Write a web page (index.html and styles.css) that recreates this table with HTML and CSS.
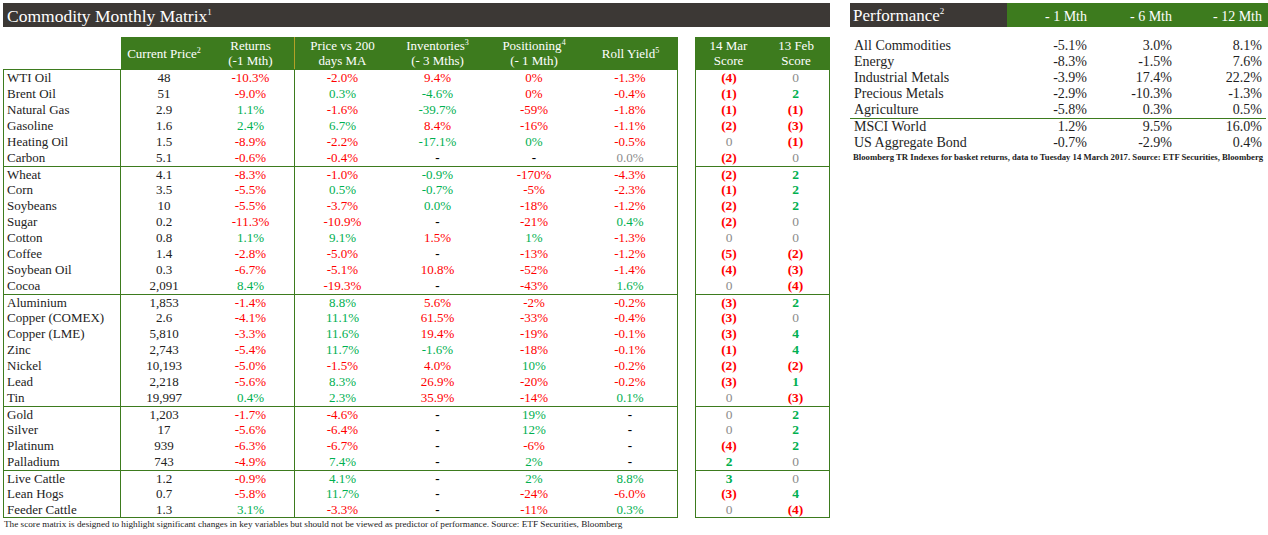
FILE: index.html
```html
<!DOCTYPE html>
<html>
<head>
<meta charset="utf-8">
<link rel="stylesheet" href="styles.css">
</head>
<body>
<div class="page">
  <section class="left">
    <div class="title">Commodity Monthly Matrix<sup>1</sup></div>
    <div class="tables">
      <div class="matrix">
        <div class="mhead">
          <div class="hc blank"></div>
          <div class="hc"><span>Current Price<sup>2</sup></span></div>
          <div class="hc sep"><span>Returns<br>(-1 Mth)</span></div>
          <div class="hc"><span>Price vs 200<br>days MA</span></div>
          <div class="hc"><span>Inventories<sup>3</sup><br>(- 3 Mths)</span></div>
          <div class="hc"><span>Positioning<sup>4</sup><br>(- 1 Mth)</span></div>
          <div class="hc"><span>Roll Yield<sup>5</sup></span></div>
        </div>
        <div class="mbody">
          <div class="grp">
            <div class="row"><span class="nm">WTI Oil</span><span class="pr">48</span><span class="r sep">-10.3%</span><span class="r">-2.0%</span><span class="r">9.4%</span><span class="r">0%</span><span class="r">-1.3%</span></div>
            <div class="row"><span class="nm">Brent Oil</span><span class="pr">51</span><span class="r sep">-9.0%</span><span class="g">0.3%</span><span class="g">-4.6%</span><span class="r">0%</span><span class="r">-0.4%</span></div>
            <div class="row"><span class="nm">Natural Gas</span><span class="pr">2.9</span><span class="g sep">1.1%</span><span class="r">-1.6%</span><span class="g">-39.7%</span><span class="r">-59%</span><span class="r">-1.8%</span></div>
            <div class="row"><span class="nm">Gasoline</span><span class="pr">1.6</span><span class="g sep">2.4%</span><span class="g">6.7%</span><span class="r">8.4%</span><span class="r">-16%</span><span class="r">-1.1%</span></div>
            <div class="row"><span class="nm">Heating Oil</span><span class="pr">1.5</span><span class="r sep">-8.9%</span><span class="r">-2.2%</span><span class="g">-17.1%</span><span class="g">0%</span><span class="r">-0.5%</span></div>
            <div class="row"><span class="nm">Carbon</span><span class="pr">5.1</span><span class="r sep">-0.6%</span><span class="r">-0.4%</span><span class="d">-</span><span class="d">-</span><span class="k">0.0%</span></div>
          </div>
          <div class="grp">
            <div class="row"><span class="nm">Wheat</span><span class="pr">4.1</span><span class="r sep">-8.3%</span><span class="r">-1.0%</span><span class="g">-0.9%</span><span class="r">-170%</span><span class="r">-4.3%</span></div>
            <div class="row"><span class="nm">Corn</span><span class="pr">3.5</span><span class="r sep">-5.5%</span><span class="g">0.5%</span><span class="g">-0.7%</span><span class="r">-5%</span><span class="r">-2.3%</span></div>
            <div class="row"><span class="nm">Soybeans</span><span class="pr">10</span><span class="r sep">-5.5%</span><span class="r">-3.7%</span><span class="g">0.0%</span><span class="r">-18%</span><span class="r">-1.2%</span></div>
            <div class="row"><span class="nm">Sugar</span><span class="pr">0.2</span><span class="r sep">-11.3%</span><span class="r">-10.9%</span><span class="d">-</span><span class="r">-21%</span><span class="g">0.4%</span></div>
            <div class="row"><span class="nm">Cotton</span><span class="pr">0.8</span><span class="g sep">1.1%</span><span class="g">9.1%</span><span class="r">1.5%</span><span class="g">1%</span><span class="r">-1.3%</span></div>
            <div class="row"><span class="nm">Coffee</span><span class="pr">1.4</span><span class="r sep">-2.8%</span><span class="r">-5.0%</span><span class="d">-</span><span class="r">-13%</span><span class="r">-1.2%</span></div>
            <div class="row"><span class="nm">Soybean Oil</span><span class="pr">0.3</span><span class="r sep">-6.7%</span><span class="r">-5.1%</span><span class="r">10.8%</span><span class="r">-52%</span><span class="r">-1.4%</span></div>
            <div class="row"><span class="nm">Cocoa</span><span class="pr">2,091</span><span class="g sep">8.4%</span><span class="r">-19.3%</span><span class="d">-</span><span class="r">-43%</span><span class="g">1.6%</span></div>
          </div>
          <div class="grp">
            <div class="row"><span class="nm">Aluminium</span><span class="pr">1,853</span><span class="r sep">-1.4%</span><span class="g">8.8%</span><span class="r">5.6%</span><span class="r">-2%</span><span class="r">-0.2%</span></div>
            <div class="row"><span class="nm">Copper (COMEX)</span><span class="pr">2.6</span><span class="r sep">-4.1%</span><span class="g">11.1%</span><span class="r">61.5%</span><span class="r">-33%</span><span class="r">-0.4%</span></div>
            <div class="row"><span class="nm">Copper (LME)</span><span class="pr">5,810</span><span class="r sep">-3.3%</span><span class="g">11.6%</span><span class="r">19.4%</span><span class="r">-19%</span><span class="r">-0.1%</span></div>
            <div class="row"><span class="nm">Zinc</span><span class="pr">2,743</span><span class="r sep">-5.4%</span><span class="g">11.7%</span><span class="g">-1.6%</span><span class="r">-18%</span><span class="r">-0.1%</span></div>
            <div class="row"><span class="nm">Nickel</span><span class="pr">10,193</span><span class="r sep">-5.0%</span><span class="r">-1.5%</span><span class="r">4.0%</span><span class="g">10%</span><span class="r">-0.2%</span></div>
            <div class="row"><span class="nm">Lead</span><span class="pr">2,218</span><span class="r sep">-5.6%</span><span class="g">8.3%</span><span class="r">26.9%</span><span class="r">-20%</span><span class="r">-0.2%</span></div>
            <div class="row"><span class="nm">Tin</span><span class="pr">19,997</span><span class="g sep">0.4%</span><span class="g">2.3%</span><span class="r">35.9%</span><span class="r">-14%</span><span class="g">0.1%</span></div>
          </div>
          <div class="grp">
            <div class="row"><span class="nm">Gold</span><span class="pr">1,203</span><span class="r sep">-1.7%</span><span class="r">-4.6%</span><span class="d">-</span><span class="g">19%</span><span class="d">-</span></div>
            <div class="row"><span class="nm">Silver</span><span class="pr">17</span><span class="r sep">-5.6%</span><span class="r">-6.4%</span><span class="d">-</span><span class="g">12%</span><span class="d">-</span></div>
            <div class="row"><span class="nm">Platinum</span><span class="pr">939</span><span class="r sep">-6.3%</span><span class="r">-6.7%</span><span class="d">-</span><span class="r">-6%</span><span class="d">-</span></div>
            <div class="row"><span class="nm">Palladium</span><span class="pr">743</span><span class="r sep">-4.9%</span><span class="g">7.4%</span><span class="d">-</span><span class="g">2%</span><span class="d">-</span></div>
          </div>
          <div class="grp">
            <div class="row"><span class="nm">Live Cattle</span><span class="pr">1.2</span><span class="r sep">-0.9%</span><span class="g">4.1%</span><span class="d">-</span><span class="g">2%</span><span class="g">8.8%</span></div>
            <div class="row"><span class="nm">Lean Hogs</span><span class="pr">0.7</span><span class="r sep">-5.8%</span><span class="g">11.7%</span><span class="d">-</span><span class="r">-24%</span><span class="r">-6.0%</span></div>
            <div class="row"><span class="nm">Feeder Cattle</span><span class="pr">1.3</span><span class="g sep">3.1%</span><span class="r">-3.3%</span><span class="d">-</span><span class="r">-11%</span><span class="g">0.3%</span></div>
          </div>
        </div>
      </div>
      <div class="score">
        <div class="shead">
          <div class="hc"><span>14 Mar<br>Score</span></div>
          <div class="hc"><span>13 Feb<br>Score</span></div>
        </div>
        <div class="sbody">
          <div class="grp">
            <div class="srow"><span class="sr">(4)</span><span class="sk">0</span></div>
            <div class="srow"><span class="sr">(1)</span><span class="sg">2</span></div>
            <div class="srow"><span class="sr">(1)</span><span class="sr">(1)</span></div>
            <div class="srow"><span class="sr">(2)</span><span class="sr">(3)</span></div>
            <div class="srow"><span class="sk">0</span><span class="sr">(1)</span></div>
            <div class="srow"><span class="sr">(2)</span><span class="sk">0</span></div>
          </div>
          <div class="grp">
            <div class="srow"><span class="sr">(2)</span><span class="sg">2</span></div>
            <div class="srow"><span class="sr">(1)</span><span class="sg">2</span></div>
            <div class="srow"><span class="sr">(2)</span><span class="sg">2</span></div>
            <div class="srow"><span class="sr">(2)</span><span class="sk">0</span></div>
            <div class="srow"><span class="sk">0</span><span class="sk">0</span></div>
            <div class="srow"><span class="sr">(5)</span><span class="sr">(2)</span></div>
            <div class="srow"><span class="sr">(4)</span><span class="sr">(3)</span></div>
            <div class="srow"><span class="sk">0</span><span class="sr">(4)</span></div>
          </div>
          <div class="grp">
            <div class="srow"><span class="sr">(3)</span><span class="sg">2</span></div>
            <div class="srow"><span class="sr">(3)</span><span class="sk">0</span></div>
            <div class="srow"><span class="sr">(3)</span><span class="sg">4</span></div>
            <div class="srow"><span class="sr">(1)</span><span class="sg">4</span></div>
            <div class="srow"><span class="sr">(2)</span><span class="sr">(2)</span></div>
            <div class="srow"><span class="sr">(3)</span><span class="sg">1</span></div>
            <div class="srow"><span class="sk">0</span><span class="sr">(3)</span></div>
          </div>
          <div class="grp">
            <div class="srow"><span class="sk">0</span><span class="sg">2</span></div>
            <div class="srow"><span class="sk">0</span><span class="sg">2</span></div>
            <div class="srow"><span class="sr">(4)</span><span class="sg">2</span></div>
            <div class="srow"><span class="sg">2</span><span class="sk">0</span></div>
          </div>
          <div class="grp">
            <div class="srow"><span class="sg">3</span><span class="sk">0</span></div>
            <div class="srow"><span class="sr">(3)</span><span class="sg">4</span></div>
            <div class="srow"><span class="sk">0</span><span class="sr">(4)</span></div>
          </div>
        </div>
      </div>
    </div>
    <div class="note">The score matrix is designed to highlight significant changes in key variables but should not be viewed as predictor of performance. Source: ETF Securities, Bloomberg</div>
  </section>
  <section class="right">
    <div class="phead">
      <div class="ptitle">Performance<sup>2</sup></div>
      <div class="pcols"><span>- 1 Mth</span><span>- 6 Mth</span><span>- 12 Mth</span></div>
    </div>
    <div class="pbody">
      <div class="pgrp">
        <div class="prow"><span>All Commodities</span><span>-5.1%</span><span>3.0%</span><span>8.1%</span></div>
        <div class="prow"><span>Energy</span><span>-8.3%</span><span>-1.5%</span><span>7.6%</span></div>
        <div class="prow"><span>Industrial Metals</span><span>-3.9%</span><span>17.4%</span><span>22.2%</span></div>
        <div class="prow"><span>Precious Metals</span><span>-2.9%</span><span>-10.3%</span><span>-1.3%</span></div>
        <div class="prow"><span>Agriculture</span><span>-5.8%</span><span>0.3%</span><span>0.5%</span></div>
      </div>
      <div class="pgrp second">
        <div class="prow"><span>MSCI World</span><span>1.2%</span><span>9.5%</span><span>16.0%</span></div>
        <div class="prow"><span>US Aggregate Bond</span><span>-0.7%</span><span>-2.9%</span><span>0.4%</span></div>
      </div>
    </div>
    <div class="pnote">Bloomberg TR Indexes for basket returns, data to Tuesday 14 March 2017. Source: ETF Securities, Bloomberg</div>
  </section>
</div>
</body>
</html>
```

FILE: styles.css
```css
* { box-sizing: border-box; }
html, body { margin: 0; padding: 0; background: #fff; }
body {
  font-family: "Liberation Serif", "Times New Roman", serif;
  color: #222;
  width: 1268px;
  height: 535px;
  overflow: hidden;
}
.page {
  display: flex;
  padding: 3px 0 0 3px;
}
.left { width: 827px; }
.right { width: 418px; margin-left: 20px; }

.title {
  height: 24px;
  background: #3c3835;
  color: #fff;
  font-size: 17.5px;
  line-height: 26px;
  padding-left: 4px;
}
.title sup, .ptitle sup { font-size: 9px; vertical-align: 7px; line-height: 0; }

.tables {
  display: flex;
  gap: 17px;
  margin-top: 10px;
}
.matrix { width: 675px; }
.score { width: 135px; }

.mhead {
  display: grid;
  grid-template-columns: 118px 86px 88px 95px 95px 98px 95px;
  height: 32px;
}
.hc {
  background: #3d7b1e;
  color: #fff;
  font-size: 13px;
  line-height: 15px;
  text-align: center;
  display: flex;
  align-items: center;
  justify-content: center;
  white-space: nowrap;
}
.hc sup { font-size: 8px; vertical-align: 5px; line-height: 0; }
.hc.blank { background: transparent; }
.hc.sep { border-right: 1px solid #b3a128; }

.mbody, .sbody {
  border: 1px solid #3d7b1e;
}
.row {
  display: grid;
  grid-template-columns: 117px 86px 88px 95px 95px 98px 94px;
  height: 16px;
  font-size: 13px;
  line-height: 15px;
}
.grp + .grp > :first-child { border-top: 1px solid #3d7b1e; }
.grp:last-child > :last-child { height: 15px; }
.row > span { text-align: center; }
.row > .nm { text-align: left; padding-left: 3px; border-right: 1px solid #3d7b1e; color: #222; }
.row > .sep { border-right: 1px solid #3d7b1e; }
.pr { color: #222; }
.r { color: #ff0000; }
.g { color: #00b050; }
.k { color: #8c8c8c; }
.d { color: #000; font-weight: bold; }

.shead {
  display: grid;
  grid-template-columns: 67px 68px;
  height: 32px;
}
.srow {
  display: grid;
  grid-template-columns: 66px 67px;
  height: 16px;
  font-size: 13.5px;
  line-height: 15px;
  text-align: center;
}
.sr { color: #ff0000; font-weight: bold; }
.sg { color: #00b050; font-weight: bold; }
.sk { color: #8c8c8c; }

.note {
  font-size: 9.2px;
  color: #222;
  margin-top: 1px;
  padding-left: 1px;
  white-space: nowrap;
}

.phead {
  display: flex;
  height: 24px;
}
.ptitle {
  width: 157px;
  background: #3c3835;
  color: #fff;
  font-size: 17px;
  line-height: 26px;
  padding-left: 3px;
}
.pcols {
  flex: 1;
  background: #3d7b1e;
  color: #fff;
  font-size: 14px;
  line-height: 27px;
  display: grid;
  grid-template-columns: 80px 85px 90px;
}
.pcols span, .prow span { text-align: right; }
.pbody { margin-top: 11px; width: 416px; }
.prow {
  display: grid;
  grid-template-columns: 157px 80px 85px 90px;
  height: 16px;
  font-size: 14px;
  line-height: 16px;
  color: #1e1e1e;
}
.prow span:first-child { text-align: left; padding-left: 4px; }
.pgrp.second { border-top: 1px solid #3d7b1e; }
.pnote {
  font-size: 8.7px;
  color: #222;
  font-weight: bold;
  padding-left: 3px;
  margin-top: 1px;
  white-space: nowrap;
}
```
